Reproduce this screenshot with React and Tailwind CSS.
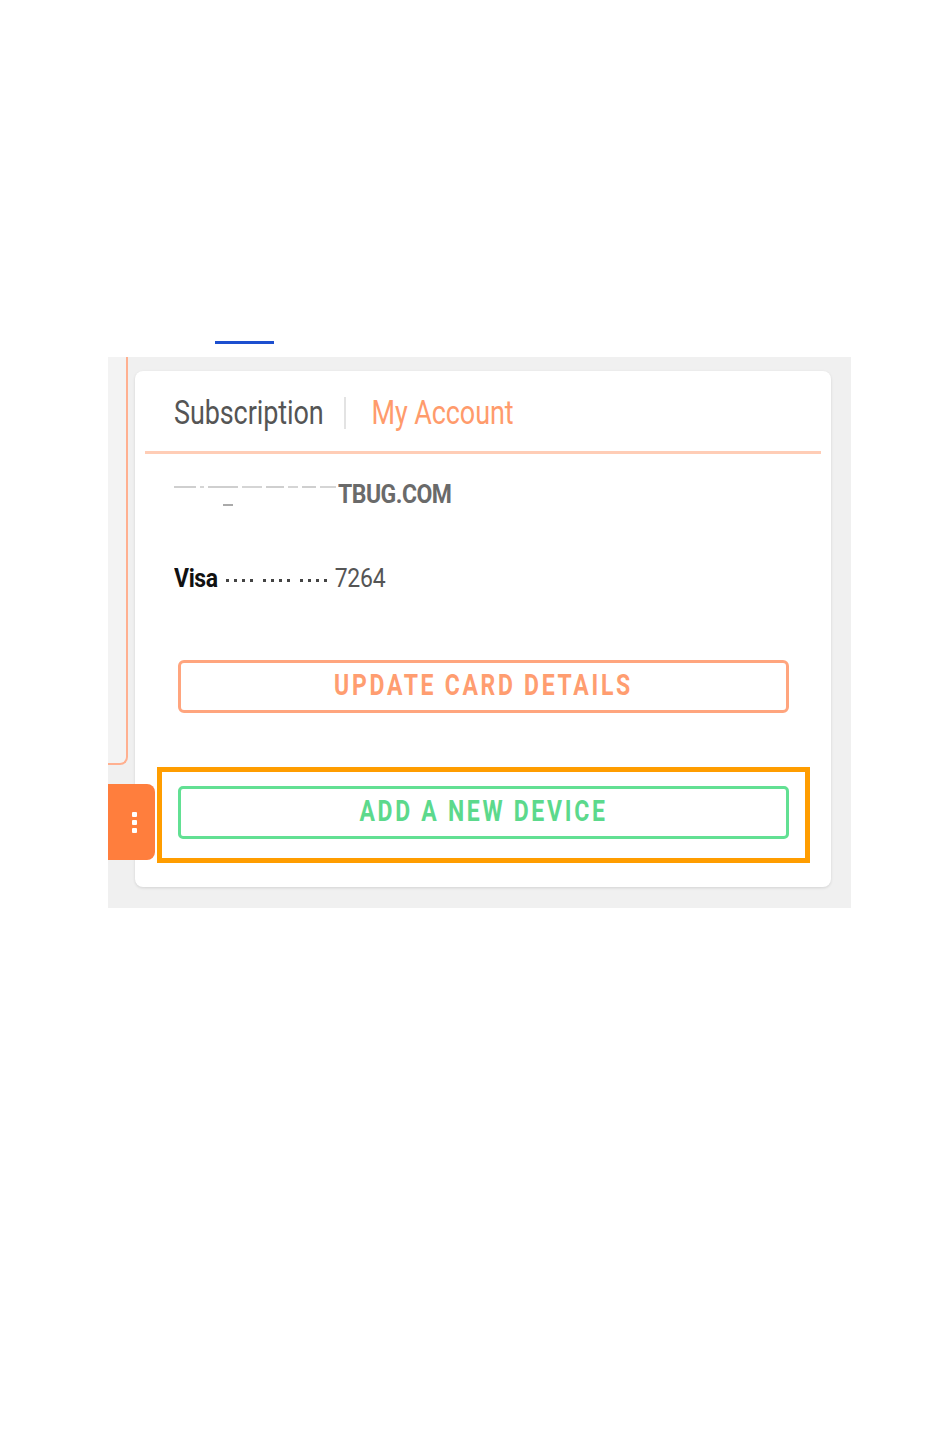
import React from "react";

export default function App() {
  return (
    <div className="w-[950px] h-[1429px] bg-white font-['Roboto',sans-serif] relative">
      <div className="pt-[341px] pl-[215px]">
        <div className="w-[59px] h-[3px] bg-[#1c4fcf]" />
      </div>
      <div className="ml-[108px] mt-[13px] w-[743px] h-[551px] bg-[#f0f0f0] flex relative">
        <div className="w-[20px] h-[408px] border-r-2 border-b-2 border-[#ffb090] rounded-br-[8px] bg-[#f3f3f3]" />
        <div className="ml-[7px] mt-[14px] w-[696px] h-[516px] bg-white rounded-[8px] shadow-[0_1px_3px_rgba(0,0,0,0.12)] flex flex-col">
          <div className="flex items-center h-[80px] pl-[39px] pt-[4px]">
            <span className="text-[27px] text-[#555] scale-y-[1.2] tracking-[-0.1px]">Subscription</span>
            <span className="ml-[20px] mr-[26px] w-[2px] h-[32px] bg-[#e3e3e3]" />
            <span className="text-[27px] text-[#ff9b6c] scale-y-[1.2] tracking-[-0.1px]">My Account</span>
          </div>
          <div className="mx-[10px] h-[3px] bg-[#ffcdb6]" />
          <div className="pl-[39px] mt-[28px] h-[26px] flex items-center relative">
            <div className="flex items-start h-full">
              <div className="flex gap-[4px] mt-[4px]">
                <span className="w-[22px] h-[2px] bg-[#cfcfcf]" />
                <span className="w-[4px] h-[2px] bg-[#d5d5d5]" />
                <span className="w-[30px] h-[2px] bg-[#cfcfcf]" />
                <span className="w-[20px] h-[2px] bg-[#d5d5d5]" />
                <span className="w-[18px] h-[2px] bg-[#cfcfcf]" />
                <span className="w-[10px] h-[2px] bg-[#d5d5d5]" />
                <span className="w-[14px] h-[2px] bg-[#cfcfcf]" />
                <span className="w-[16px] h-[2px] bg-[#d5d5d5]" />
              </div>
            </div>
            <span className="absolute left-[88px] top-[22px] w-[10px] h-[2px] bg-[#aaa]" />
            <span className="ml-[2px] text-[23px] font-bold text-[#6a6a6a] scale-y-[1.15] tracking-[-0.5px]">TBUG.COM</span>
          </div>
          <div className="pl-[39px] mt-[58px] flex items-center h-[26px]">
            <span className="text-[23px] font-bold text-[#111] scale-y-[1.15] tracking-[-0.4px]">Visa</span>
            <span className="ml-[8px] mt-[2px] flex gap-[10px]">
              {[0, 1, 2].map((g) => (
                <span key={g} className="flex gap-[5px]">
                  <span className="w-[3px] h-[3px] bg-[#444]" />
                  <span className="w-[3px] h-[3px] bg-[#444]" />
                  <span className="w-[3px] h-[3px] bg-[#444]" />
                  <span className="w-[3px] h-[3px] bg-[#444]" />
                </span>
              ))}
            </span>
            <span className="ml-[8px] text-[23px] text-[#555] scale-y-[1.15] tracking-[-0.2px]">7264</span>
          </div>
          <div className="ml-[43px] mt-[68px] w-[611px] h-[53px] border-[3px] border-[#ffa57e] rounded-[6px] flex items-center justify-center">
            <span className="text-[23px] font-bold text-[#ff9d70] tracking-[2.7px] scale-y-[1.3]">UPDATE CARD DETAILS</span>
          </div>
          <div className="ml-[22px] mt-[54px] w-[653px] h-[96px] border-[5px] border-[#ff9d00] pl-[16px] pt-[14px]">
            <div className="w-[611px] h-[53px] border-[3px] border-[#62e093] rounded-[5px] flex items-center justify-center">
              <span className="text-[23px] font-bold text-[#5cd98c] tracking-[2.7px] scale-y-[1.3]">ADD A NEW DEVICE</span>
            </div>
          </div>
        </div>
        <div className="absolute left-0 top-[427px] w-[47px] h-[76px] bg-[#ff7e3d] rounded-r-[8px] flex flex-col items-center justify-center gap-[3px] pl-[6px]">
          <span className="w-[5px] h-[5px] bg-white rounded-[1px]" />
          <span className="w-[5px] h-[5px] bg-white rounded-[1px]" />
          <span className="w-[5px] h-[5px] bg-white rounded-[1px]" />
        </div>
      </div>
    </div>
  );
}
